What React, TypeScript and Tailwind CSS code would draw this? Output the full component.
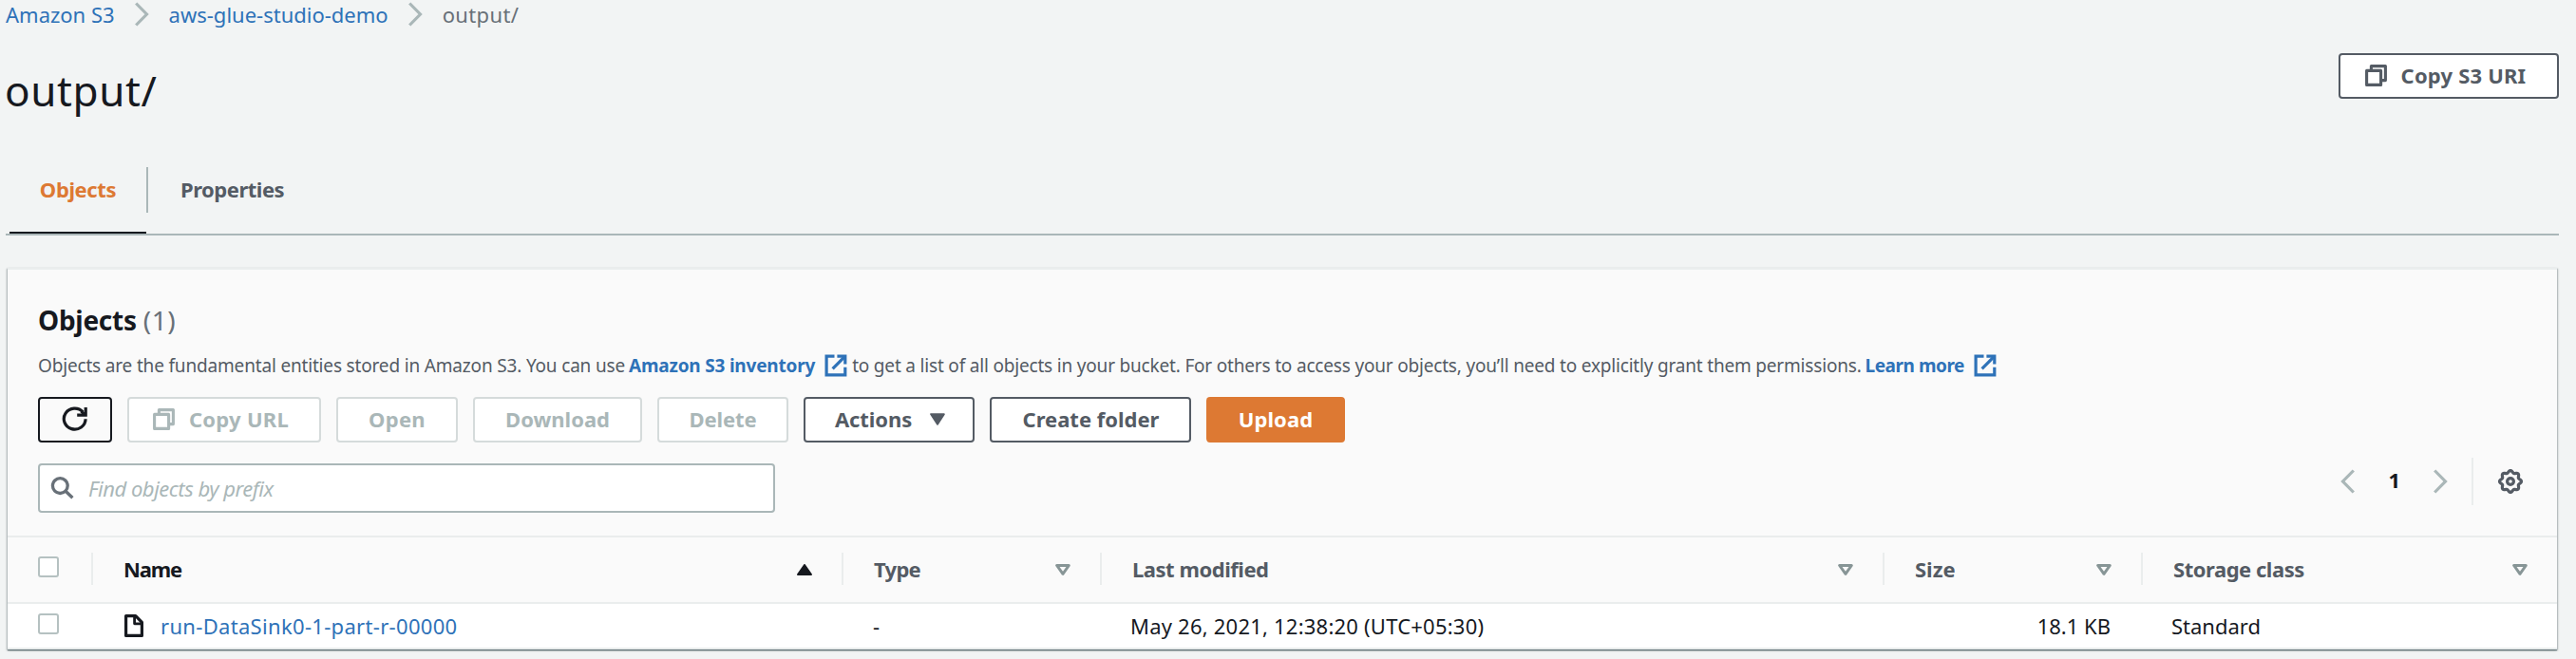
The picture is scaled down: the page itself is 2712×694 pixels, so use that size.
import type { ReactNode } from "react";
import clsx from "clsx";

type IconProps = { className?: string };

function ChevronRight({ className }: IconProps) {
  return (
    <svg className={clsx("shrink-0", className)} width="15" height="26" viewBox="0 0 15 26" fill="none" stroke="#aab7b8" strokeWidth="3.2">
      <path d="M1.2 1.5 12.5 13 1.2 24.5" />
    </svg>
  );
}

function ChevronLeft({ className }: IconProps) {
  return (
    <svg className={clsx("shrink-0", className)} width="15" height="26" viewBox="0 0 15 26" fill="none" stroke="#aab7b8" strokeWidth="3.2">
      <path d="M13.8 1.5 2.5 13l11.3 11.5" />
    </svg>
  );
}

function CopyIcon({ className }: IconProps) {
  return (
    <svg className={clsx("shrink-0", className)} width="23" height="23" viewBox="0 0 23 23" fill="none" stroke="currentColor" strokeWidth="3.1" strokeLinejoin="round">
      <path d="M1.6 6.4h15v15h-15z" />
      <path d="M6.4 6.2V1.6h15v15h-4.8" />
    </svg>
  );
}

function RefreshIcon() {
  return (
    <svg width="28" height="26" viewBox="0 0 28 26" fill="none" stroke="currentColor" strokeWidth="3.2">
      <path d="M25.1 13.3A11.4 11 0 1 1 22.3 5.9" />
      <path d="M25.2 1v8.1H16.2" />
      <path d="M20.6 5.2 24 8.6" />
    </svg>
  );
}

function SearchIcon() {
  return (
    <svg className="shrink-0" width="26" height="24" viewBox="0 0 26 24" fill="none" stroke="#687078" strokeWidth="3.3">
      <circle cx="10.3" cy="9.6" r="7.9" />
      <path d="m15.8 15 7.6 7.2" />
    </svg>
  );
}

function ExternalIcon({ className }: IconProps) {
  return (
    <svg className={clsx("shrink-0", className)} width="24" height="24" viewBox="0 0 24 24" fill="none" stroke="currentColor" strokeWidth="3.2">
      <path d="M10.5 2.1H2.1v19.8h19.7v-8.2" />
      <path d="M13.4 2.1h8.4v8.3" />
      <path d="M21 2.9 8.6 15.3" />
    </svg>
  );
}

function FileIcon() {
  return (
    <svg className="shrink-0" width="20" height="24" viewBox="0 0 20 24" fill="none" stroke="#16191f" strokeWidth="3.2" strokeLinejoin="round">
      <path d="M1.6 1.6h10.2l6.6 6.8v14H1.6z" />
      <path d="M10.6 2v7.8h7.4" strokeWidth="2.8" />
    </svg>
  );
}

const gearPath =
  Array.from({ length: 97 }, (_, i) => {
    const angle = (i / 96) * Math.PI * 2;
    const radius = 10.3 + 1.15 * Math.cos(8 * angle);
    const x = (13 + radius * Math.sin(angle)).toFixed(2);
    const y = (13 - radius * Math.cos(angle)).toFixed(2);
    return `${i === 0 ? "M" : "L"}${x} ${y}`;
  }).join("") + "Z";

function GearIcon() {
  return (
    <svg className="shrink-0" width="26" height="26" viewBox="0 0 26 26" fill="none" stroke="#545b64" strokeWidth="3">
      <path d={gearPath} strokeWidth="3.2" />
      <circle cx="13" cy="13" r="3.4" strokeWidth="3.2" />
    </svg>
  );
}

function SortIcon({ kind }: { kind: "none" | "ascending" }) {
  return (
    <svg className="shrink-0" width="16" height="12" viewBox="0 0 16 12" strokeLinejoin="round">
      {kind === "none" ? (
        <path d="M1.7 1.5h12.6L8 10.4z" fill="none" stroke="#879596" strokeWidth="3" />
      ) : (
        <path d="M1 11h14L8 1z" fill="#16191f" stroke="#16191f" strokeWidth="2" />
      )}
    </svg>
  );
}

function CaretDown({ className }: IconProps) {
  return (
    <svg className={clsx("shrink-0", className)} width="16" height="13" viewBox="0 0 16 13" fill="currentColor" stroke="currentColor" strokeWidth="2" strokeLinejoin="round">
      <path d="M1.2 1.2h13.6L8 11.6z" />
    </svg>
  );
}

const buttonTones = {
  normal: "border-[#545b64] bg-white text-[#545b64]",
  strong: "border-[#16191f] bg-[#fafafa] text-[#16191f]",
  disabled: "border-[#d5dbdb] bg-white text-[#aab7b8]",
  primary: "border-[#dd7933] bg-[#dd7933] text-white",
};

function Button({ tone, className, children }: { tone: keyof typeof buttonTones; className?: string; children: ReactNode }) {
  return (
    <button
      type="button"
      disabled={tone === "disabled"}
      className={clsx(
        "flex h-12 shrink-0 items-center justify-center rounded-[4px] border-2 pb-[2px] text-[22px] leading-none font-bold whitespace-nowrap",
        buttonTones[tone],
        className,
      )}
    >
      {children}
    </button>
  );
}

function Checkbox() {
  return <span className="block size-[22px] rounded-[3px] border-2 border-[#b5c1c1] bg-white" />;
}

function HeaderCell({ label, sort = "none", last = false, className }: { label: string; sort?: "none" | "ascending"; last?: boolean; className?: string }) {
  return (
    <div
      className={clsx(
        "flex h-[34px] items-center justify-between pr-[31px] pl-8 font-bold",
        !last && "border-r-2 border-[#eaeded]",
        sort === "ascending" ? "text-[#16191f]" : "text-[#545b64]",
      )}
    >
      <span className={className}>{label}</span>
      <span className="flex pt-[2px]">
        <SortIcon kind={sort} />
      </span>
    </div>
  );
}

const tableColumns = "grid grid-cols-[90px_790px_272px_824px_272px_436px] items-center";

export default function App() {
  return (
    <div className="h-[694px] overflow-hidden bg-[#f2f4f4] font-['Noto_Sans',sans-serif] text-[22px] leading-none whitespace-nowrap text-[#16191f]">
      <nav className="flex h-[31px] items-center pb-px pl-[6px]">
        <a className="text-[#2e72b8]">Amazon S3</a>
        <ChevronRight className="ml-[21px]" />
        <a className="ml-[21px] text-[#2e72b8]">aws-glue-studio-demo</a>
        <ChevronRight className="ml-[21px]" />
        <span className="ml-[21px] tracking-[0.35px] text-[#687078]">output/</span>
      </nav>

      <header className="flex h-[145px] items-start justify-between pt-[25px] pr-[18px] pl-[5px]">
        <h1 className="mt-[9px] text-[44px] leading-[60px] tracking-[0.6px]">output/</h1>
        <Button tone="normal" className="w-[232px] pr-[7px]">
          <CopyIcon className="mr-[15px]" />
          <span className="tracking-[0.19px]">Copy S3 URI</span>
        </Button>
      </header>

      <div className="mr-[18px] ml-[6px] flex h-[72px] border-b-2 border-[#aab7b8] pl-1 font-bold">
        <div className="flex w-36 items-start justify-center border-b-2 border-[#16191f]">
          <span className="leading-[46px] tracking-[-0.38px] text-[#dd7933]">Objects</span>
        </div>
        <div className="h-12 w-[2px] bg-[#aab7b8]" />
        <span className="ml-[34px] leading-[46px] tracking-[-0.48px] text-[#545b64]">Properties</span>
      </div>

      <main className="mt-[34px] mr-5 ml-2 h-[402px] border-t-2 border-[#eaeded] bg-[#fafafa] shadow-[0_1px_1px_0_rgba(0,28,36,0.45),1px_1px_2px_0_rgba(0,28,36,0.25),-1px_1px_2px_0_rgba(0,28,36,0.25)]">
        <section className="h-[280px] px-8 pt-[33px]">
          <h2 className="flex text-[28px] leading-10">
            <span className="font-bold tracking-[-0.27px]">Objects</span>
            <span className="ml-[7px] tracking-[0.6px] text-[#687078]">(1)</span>
          </h2>

          <p className="mt-[10px] flex h-9 items-center text-[19px] text-[#545b64]">
            <span className="tracking-[-0.17px]">Objects are the fundamental entities stored in Amazon S3. You can use</span>
            <a className="ml-[4px] flex items-center font-bold tracking-[-0.2px] text-[#2e72b8]">
              Amazon S3 inventory
              <ExternalIcon className="ml-[10px]" />
            </a>
            <span className="ml-[5px] tracking-[-0.185px]">
              to get a list of all objects in your bucket. For others to access your objects, you’ll need to explicitly grant them permissions.
            </span>
            <a className="ml-[4px] flex items-center font-bold tracking-[-0.46px] text-[#2e72b8]">
              Learn more
              <ExternalIcon className="ml-[10px]" />
            </a>
          </p>

          <div className="mt-[15px] flex gap-4">
            <Button tone="strong" className="w-[78px]">
              <RefreshIcon />
            </Button>
            <Button tone="disabled" className="w-[204px] pr-[7px]">
              <CopyIcon className="mr-[15px]" />
              <span className="tracking-[0.27px]">Copy URL</span>
            </Button>
            <Button tone="disabled" className="w-32">
              <span className="tracking-[0.3px]">Open</span>
            </Button>
            <Button tone="disabled" className="w-[178px]">Download</Button>
            <Button tone="disabled" className="w-[138px]">
              <span className="tracking-[-0.14px]">Delete</span>
            </Button>
            <Button tone="normal" className="w-[180px] pl-[2px]">
              <span className="tracking-[-0.08px]">Actions</span>
              <CaretDown className="ml-[19px]" />
            </Button>
            <Button tone="normal" className="w-[212px] pl-px">Create folder</Button>
            <Button tone="primary" className="w-[146px]">
              <span className="tracking-[0.12px]">Upload</span>
            </Button>
          </div>

          <div className="mt-[22px] flex items-start justify-between">
            <div className="flex h-[52px] w-[776px] items-center rounded-[4px] border-2 border-[#aab7b8] bg-white pb-px pl-[11px]">
              <SearchIcon />
              <span className="ml-[14px] tracking-[-0.48px] text-[#aab7b8] italic">Find objects by prefix</span>
            </div>
            <div className="-mt-[6px] mr-1 flex h-[50px] items-center">
              <ChevronLeft />
              <span className="mr-[35px] ml-[35px] pb-[4px] font-bold">1</span>
              <ChevronRight />
              <span className="ml-[25px] h-[50px] w-[2px] bg-[#eaeded]" />
              <span className="ml-[26px]">
                <GearIcon />
              </span>
            </div>
          </div>
        </section>

        <section>
          <div className={clsx(tableColumns, "h-[72px] border-y-2 border-[#eaeded] pb-[2px]")}>
            <div className="flex h-[34px] items-center border-r-2 border-[#eaeded] pb-1 pl-8">
              <Checkbox />
            </div>
            <HeaderCell label="Name" sort="ascending" className="tracking-[-1.2px]" />
            <HeaderCell label="Type" className="tracking-[-0.7px]" />
            <HeaderCell label="Last modified" className="tracking-[-0.47px]" />
            <HeaderCell label="Size" />
            <HeaderCell label="Storage class" last className="tracking-[-0.47px]" />
          </div>

          <div className={clsx(tableColumns, "h-12 border-b-2 border-[#eaeded] bg-white")}>
            <div className="pb-[4px] pl-8">
              <Checkbox />
            </div>
            <div className="flex items-center pl-[33px]">
              <FileIcon />
              <a className="ml-[18px] tracking-[0.32px] text-[#2e72b8]">run-DataSink0-1-part-r-00000</a>
            </div>
            <span className="pl-[31px]">-</span>
            <span className="pl-[30px] tracking-[0.22px]">May 26, 2021, 12:38:20 (UTC+05:30)</span>
            <span className="pr-[34px] text-right">18.1 KB</span>
            <span className="pl-[30px]">Standard</span>
          </div>
        </section>
      </main>
    </div>
  );
}
